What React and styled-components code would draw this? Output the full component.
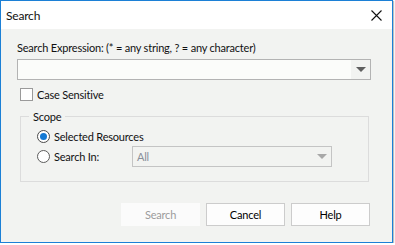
import React from 'react';
import styled, { createGlobalStyle } from 'styled-components';

const Global = createGlobalStyle`
  html, body { margin: 0; padding: 0; background: #ffffff; }
  body {
    font-family: Lato, "Noto Sans", sans-serif;
    font-size: 11px;
    letter-spacing: -0.2px;
    color: #111;
  }
`;

const Window = styled.div`
  width: 393px;
  height: 243px;
  box-sizing: border-box;
  border: 1px solid #1c80d6;
  background: #f2f3f1;
  box-shadow: 1px 1px 1px rgba(0,0,0,0.25);
  display: flex;
  flex-direction: column;
`;

const TitleBar = styled.div`
  height: 28px;
  background: #ffffff;
  display: flex;
  align-items: center;
  justify-content: space-between;
  padding: 0 10px 0 5px;
  font-size: 12px;
`;

const Body = styled.div`
  padding: 11px 21px 0 16px;
  display: flex;
  flex-direction: column;
`;

const Label = styled.div`
  line-height: 15px;
  height: 15px;
  white-space: nowrap;
`;

const Combo = styled.div`
  margin-top: ${p => (p.inline ? 0 : 4)}px;
  height: 21px;
  box-sizing: border-box;
  border: 1px solid ${p => (p.disabled ? '#c4c4c4' : '#b3b3b3')};
  background: ${p => (p.disabled ? '#f2f3f1' : '#fbfcfa')};
  display: flex;
  align-items: center;
  color: ${p => (p.disabled ? '#8a8f9a' : '#000')};
  width: ${p => p.width || 'auto'};
`;

const ComboText = styled.div`
  flex: 1;
  padding-left: 4px;
  line-height: 15px;
`;

const ArrowBox = styled.div`
  width: 19px;
  align-self: stretch;
  background: ${p => (p.disabled ? 'transparent' : '#f2f3f1')};
  display: flex;
  align-items: center;
  justify-content: center;
`;

const Arrow = styled.div`
  width: 0;
  height: 0;
  border-left: 5px solid transparent;
  border-right: 5px solid transparent;
  border-top: 5px solid ${p => (p.disabled ? '#a8a8a8' : '#5f5f5f')};
`;

const CheckRow = styled.label`
  margin-top: 7px;
  display: flex;
  align-items: center;
  gap: 4px;
  height: 15px;
  padding-left: 3px;
`;

const CheckBox = styled.span`
  width: 13px;
  height: 13px;
  box-sizing: border-box;
  border: 1px solid #9a9a9a;
  background: #ffffff;
`;

const Group = styled.fieldset`
  margin: 7px 2px 0 3px;
  padding: 0 0 0 16px;
  border: 1px solid #dcdcdc;
  height: 73px;
  box-sizing: border-box;
`;

const Legend = styled.legend`
  padding: 0 4px;
  margin-left: -8px;
  line-height: 15px;
`;

const RadioRow = styled.div`
  display: flex;
  align-items: center;
  height: ${p => p.h}px;
  margin-top: ${p => p.mt}px;
`;

const Radio = styled.span`
  width: 13px;
  height: 13px;
  box-sizing: border-box;
  border-radius: 50%;
  border: 1px solid ${p => (p.checked ? '#4a4a4a' : '#5c5c5c')};
  background: #ffffff;
  display: flex;
  align-items: center;
  justify-content: center;
  margin-right: 4px;
  &::after {
    content: '';
    display: ${p => (p.checked ? 'block' : 'none')};
    width: 7px;
    height: 7px;
    border-radius: 50%;
    background: #1479d4;
  }
`;

const RadioText = styled.span`
  width: ${p => p.w || 'auto'};
  line-height: 15px;
`;

const Buttons = styled.div`
  margin-top: 21px;
  display: flex;
  justify-content: flex-end;
  gap: 6px;
  padding-right: 1px;
`;

const Button = styled.div`
  width: 79px;
  height: 23px;
  box-sizing: border-box;
  border: 1px solid ${p => (p.disabled ? '#fbfbfb' : '#cccccc')};
  background: ${p => (p.disabled ? '#fbfbfb' : '#fdfdfd')};
  color: ${p => (p.disabled ? '#9c9c9c' : '#000')};
  display: flex;
  align-items: center;
  justify-content: center;
`;

function Close() {
  return (
    <svg width="11" height="11" viewBox="0 0 11 11">
      <path d="M0.5 0.5 L10.5 10.5 M10.5 0.5 L0.5 10.5" stroke="#111" strokeWidth="1.1" />
    </svg>
  );
}

export default function App() {
  return (
    <>
      <Global />
      <Window>
        <TitleBar>
          <span>Search</span>
          <Close />
        </TitleBar>
        <Body>
          <Label>Search Expression: (* = any string, ? = any character)</Label>
          <Combo>
            <ComboText />
            <ArrowBox><Arrow /></ArrowBox>
          </Combo>
          <CheckRow>
            <CheckBox />
            <span>Case Sensitive</span>
          </CheckRow>
          <Group>
            <Legend>Scope</Legend>
            <RadioRow h={15} mt={5}>
              <Radio checked />
              <RadioText>Selected Resources</RadioText>
            </RadioRow>
            <RadioRow h={20} mt={2}>
              <Radio />
              <RadioText w="78px">Search In:</RadioText>
              <Combo inline disabled width="200px">
                <ComboText>All</ComboText>
                <ArrowBox disabled><Arrow disabled /></ArrowBox>
              </Combo>
            </RadioRow>
          </Group>
          <Buttons>
            <Button disabled>Search</Button>
            <Button>Cancel</Button>
            <Button>Help</Button>
          </Buttons>
        </Body>
      </Window>
    </>
  );
}
